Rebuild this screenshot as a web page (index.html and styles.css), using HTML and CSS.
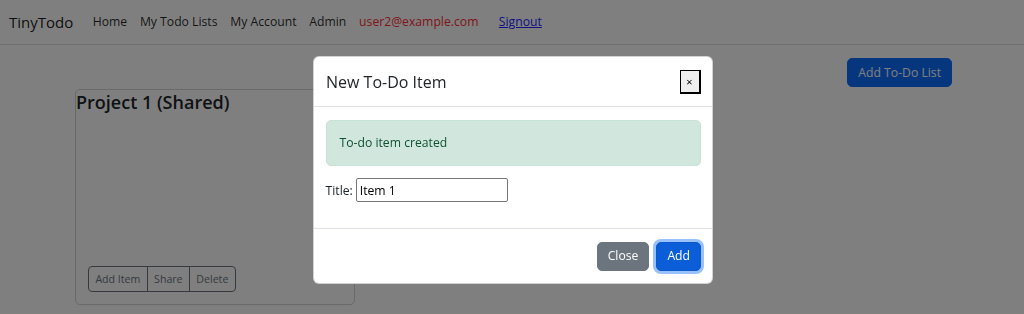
FILE: index.html
```html
<!DOCTYPE html>
<html lang="en">

<head>
    <meta charset="UTF-8" />
    <meta name="viewport" content="width=device-width, initial-scale=1.0" />
    <title>TinyTodo</title>
    <link rel="stylesheet" href="styles.css">
</head>

<body>
    <nav class="navbar">
        <a class="brand" href="#">TinyTodo</a>
        <ul class="nav">
            <li><a class="nav-link" href="#">Home</a></li>
            <li><a class="nav-link" href="#">My Todo Lists</a></li>
            <li><a class="nav-link" href="#">My Account</a></li>
            <li><a class="nav-link" href="#">Admin</a></li>
            <li><span class="nav-link user">user2@example.com</span></li>
            <li><a class="signout" href="#">Signout</a></li>
        </ul>
    </nav>

    <main class="container">
        <div class="toolbar">
            <button class="btn btn-primary">Add To-Do List</button>
        </div>
        <div class="lists">
            <div class="card">
                <h4 class="card-title">Project 1 (Shared)</h4>
                <div class="btn-group">
                    <button class="btn-sm">Add Item</button>
                    <button class="btn-sm">Share</button>
                    <button class="btn-sm">Delete</button>
                </div>
            </div>
        </div>
    </main>

    <div class="backdrop"></div>

    <div class="modal">
        <div class="modal-header">
            <h5 class="modal-title">New To-Do Item</h5>
            <button class="close-x">×</button>
        </div>
        <div class="modal-body">
            <div class="alert">To-do item created</div>
            <p class="field">
                <label for="title">Title:</label>
                <input id="title" type="text" value="Item 1">
            </p>
        </div>
        <div class="modal-footer">
            <button class="btn btn-secondary">Close</button>
            <button class="btn btn-primary focused">Add</button>
        </div>
    </div>
</body>

</html>
```

FILE: styles.css
```css
* {
    margin: 0;
    padding: 0;
    box-sizing: border-box;
}

body {
    font-family: 'Segoe UI', 'Open Sans', sans-serif;
    font-size: 12.2px;
    line-height: 19.2px;
    color: #212529;
    background: #fff;
    height: 314px;
    overflow: hidden;
}

button {
    font-family: inherit;
}

/* navbar */
.navbar {
    display: flex;
    align-items: center;
    padding: 6px 9px;
    border-bottom: 1px solid #dee2e6;
    height: 45px;
}

.brand {
    font-size: 15px;
    line-height: 24px;
    color: rgba(0, 0, 0, 0.9);
    text-decoration: none;
    margin-right: 13px;
}

.nav {
    display: flex;
    align-items: center;
    list-style: none;
}

.nav-link {
    display: block;
    padding: 6px 6.4px;
    color: rgba(0, 0, 0, 0.85);
    text-decoration: none;
}

.nav-link.user {
    color: #ff2b36;
}

.signout {
    margin-left: 14px;
    color: #2323ff;
    text-decoration: underline;
}

/* page */
.container {
    padding: 0 72px 0 75px;
}

.toolbar {
    display: flex;
    justify-content: flex-end;
    padding-top: 13px;
}

.btn {
    border: 1px solid transparent;
    border-radius: 5px;
    padding: 4.5px 10px;
    font-size: 12.2px;
    line-height: 18px;
    color: #fff;
    cursor: pointer;
}

.btn-primary {
    background: #0d6efd;
    border-color: #0d6efd;
}

.btn-secondary {
    background: #6c757d;
    border-color: #6c757d;
}

.lists {
    margin-top: 2px;
}

.card {
    width: 280px;
    height: 216px;
    border: 1px solid rgba(0, 0, 0, 0.175);
    border-radius: 5px;
    display: flex;
    flex-direction: column;
    justify-content: space-between;
    padding: 0 0 12px 12px;
}

.card-title {
    font-size: 18px;
    font-weight: 600;
    line-height: 22px;
    margin: 1px 0 0 -12px;
}

.btn-group {
    display: flex;
}

.btn-sm {
    background: transparent;
    border: 1px solid #6c757d;
    color: #6c757d;
    font-size: 10.6px;
    line-height: 17px;
    padding: 3.5px 6.4px;
}

.btn-sm + .btn-sm {
    margin-left: -1px;
}

.btn-sm:first-child {
    border-radius: 4px 0 0 4px;
}

.btn-sm:last-child {
    border-radius: 0 4px 4px 0;
}

/* modal */
.backdrop {
    position: fixed;
    inset: 0;
    background: rgba(0, 0, 0, 0.5);
}

.modal {
    position: fixed;
    top: 56px;
    left: 313px;
    width: 400px;
    background: #fff;
    border-radius: 6px;
    border: 1px solid rgba(0, 0, 0, 0.175);
}

.modal-header {
    display: flex;
    align-items: center;
    justify-content: space-between;
    padding: 0 11.5px 0 12px;
    height: 50px;
    border-bottom: 1px solid #dee2e6;
}

.modal-title {
    font-size: 16px;
    font-weight: 500;
    line-height: 24px;
}

.close-x {
    width: 21px;
    height: 24px;
    font-size: 11px;
    background: #efefef;
    border: 1px solid #000;
    border-right-width: 2px;
    border-bottom-width: 2px;
    color: #000;
}

.modal-body {
    padding: 12.5px 11.5px 12.8px;
}

.alert {
    background: #d1e7dd;
    color: #0f5132;
    border: 1px solid #c7e2d6;
    border-radius: 5px;
    padding: 12.5px 13px;
    margin-bottom: 12.5px;
    line-height: 19.2px;
}

.field {
    display: flex;
    align-items: center;
    margin-bottom: 12.8px;
}

.field label {
    margin-right: 3px;
}

.field input {
    width: 152px;
    height: 24px;
    border: 1px solid #767676;
    border-radius: 2px;
    padding: 0 3px;
    font-family: inherit;
    font-size: 12.2px;
    color: #000;
}

.modal-footer {
    display: flex;
    justify-content: flex-end;
    gap: 7px;
    padding: 13px 11px 12px;
    border-top: 1px solid #dee2e6;
}

.focused {
    background: #0b5ed7;
    border-color: #0a58ca;
    box-shadow: 0 0 0 3px rgba(49, 132, 253, 0.5);
}
```
